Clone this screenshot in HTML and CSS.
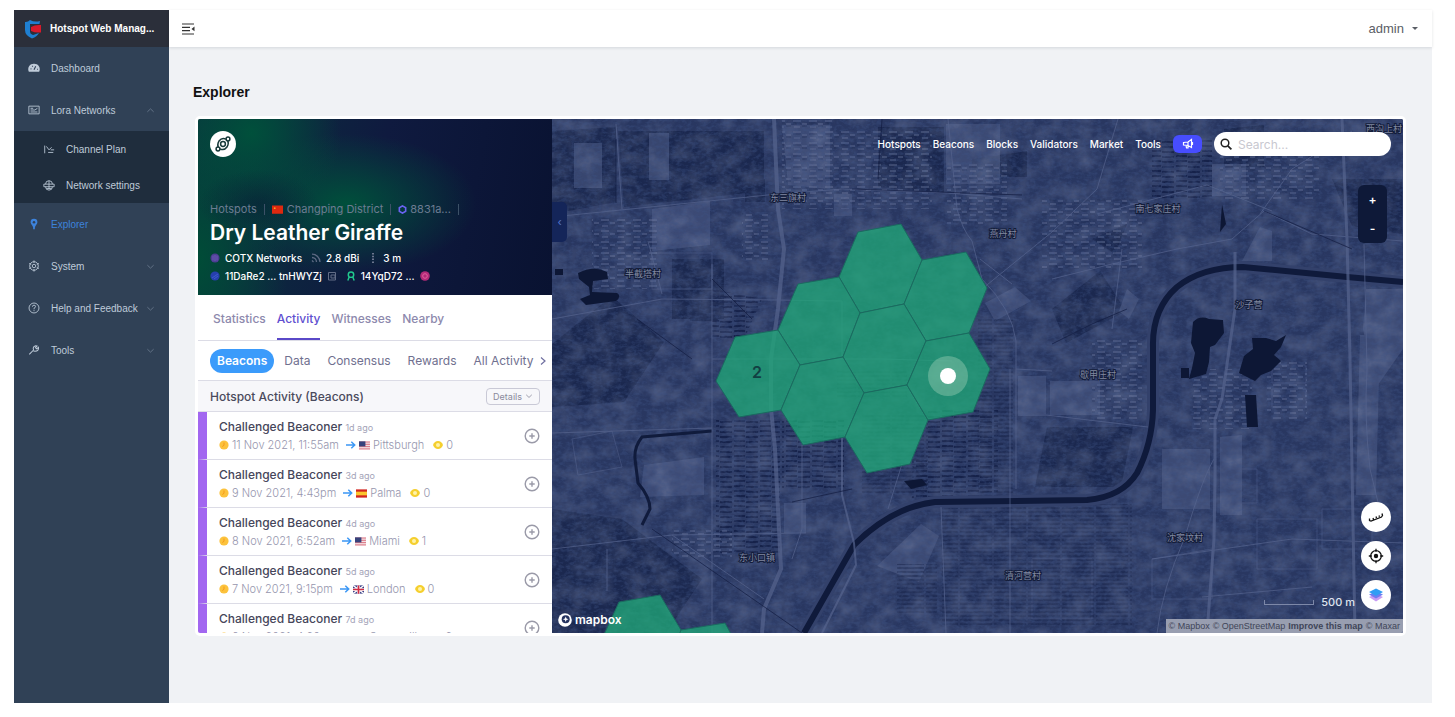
FILE: index.html
```html
<!DOCTYPE html>
<html lang="en">
<head>
  <meta charset="UTF-8">
  <meta name="viewport" content="width=device-width, initial-scale=1">
  <title>Hotspot Web Manager - Explorer</title>
  <link rel="stylesheet" href="styles.css">
</head>
<body>
  <!-- Shared symbols -->
  <svg class="symbols" aria-hidden="true">
    <symbol id="chevron" viewBox="0 0 10 10"><path d="M1.500 3.500 5 6.800l3.500-3.300" fill="none" stroke="currentColor"/></symbol>
    <symbol id="clock" viewBox="0 0 10 10"><circle cx="5" cy="5" r="4.600" fill="#fcc23c"/><path d="M5 2.500V5.300L3.300 6.500" fill="none" stroke="#f59a1b"/></symbol>
    <symbol id="arrow" viewBox="0 0 10 10"><path d="M0 5h8.500M5.300 1.800 8.700 5 5.300 8.200" fill="none" stroke="#3b97f5" stroke-width="1.500"/></symbol>
    <symbol id="eye" viewBox="0 0 10 10"><path d="M0 5Q1.500 1 5 1t5 4q-1.500 4-5 4T0 5z" fill="#f5cf2e"/><circle cx="5" cy="5" r="2" fill="#fff3a8"/></symbol>
    <symbol id="plus" viewBox="0 0 16 16"><circle cx="8" cy="8" r="6.800" fill="none" stroke="currentColor" stroke-width="1.400"/><path d="M8 5.300v5.400M5.300 8h5.400" stroke="currentColor" stroke-width="1.400"/></symbol>
    <symbol id="flag-us" viewBox="0 0 12 9"><path fill="#f3dfe2" d="M0 0h12v9H0z"/><path d="M0 .7h12M0 3.200h12M0 5.700h12M0 8.200h12" stroke="#d9697a"/><path fill="#37437c" d="M0 0h7v5.500H0z"/></symbol>
    <symbol id="flag-es" viewBox="0 0 12 9"><path fill="#d3241e" d="M0 0h12v9H0z"/><path fill="#fbc52d" d="M0 2.500h12v4H0z"/></symbol>
    <symbol id="flag-gb" viewBox="0 0 12 9"><path fill="#3a3f86" d="M0 0h12v9H0z"/><path d="m0 0 12 9M12 0 0 9" stroke="#fff" stroke-width="1.500"/><path d="M6 0v9M0 4.500h12" stroke="#fff" stroke-width="3"/><path d="M6 0v9M0 4.500h12" stroke="#d22d43" stroke-width="1.800"/></symbol>
  </svg>

  <div class="app">
    <aside class="sidebar">
      <a href="#" class="logo">
        <svg viewBox="0 0 18 20"><path fill="#1f7fd0" d="M1 3q3 .3 5-2 4.500 2.500 10 1l-.5 3H6v8q0 2 3 3l6-2q-2 3.500-7 5.500-7-3-7-8.500z"/><path fill="#d71a2b" d="M7 8q4-2.500 10-2v7.500Q11 14 7 12z"/></svg>
        <span>Hotspot Web Manag...</span>
      </a>
      <nav>
        <ul class="menu">
          <li><a href="#">
            <svg class="icon" viewBox="0 0 14 14"><path fill="currentColor" d="M7 2a6.500 6.500 0 0 0-6 9.500h12A6.500 6.500 0 0 0 7 2z"/><path d="m7 9 2-4M3 8h1M10.500 8.500h1M5 4.500l.6.8" stroke="#304156" stroke-width="1.300"/></svg>
            Dashboard</a></li>
          <li>
            <a href="#">
              <svg class="icon" viewBox="0 0 14 14"><path d="M1 2.500h12v9H1zM3 5h3M3 7h5l3-2M3 9.300h8" fill="none" stroke="currentColor"/></svg>
              Lora Networks<svg class="chevron up"><use href="#chevron"/></svg></a>
            <ul class="submenu">
              <li><a href="#"><svg class="icon" viewBox="0 0 14 14"><path d="M2 3v9M4 4l3 4 3-3M6 11h6M9 8h4" fill="none" stroke="currentColor"/></svg>Channel Plan</a></li>
              <li><a href="#"><svg class="icon" viewBox="0 0 14 14"><path d="M3 6a4 4 0 0 1 8 0M1 6h12v3H1zM3 9a4 4 0 0 0 8 0M7 2v10M4 11h6" fill="none" stroke="currentColor"/></svg>Network settings</a></li>
            </ul>
          </li>
          <li><a href="#" class="active">
            <svg class="icon" viewBox="0 0 14 14"><path fill="currentColor" d="M7 1a4 4 0 0 0-4 4c0 2 2.500 4 3 6v2h2v-2c.5-2 3-4 3-6a4 4 0 0 0-4-4z"/><circle cx="7" cy="5" r="1.500" fill="#304156"/></svg>
            Explorer</a></li>
          <li><a href="#">
            <svg class="icon" viewBox="0 0 14 14"><g fill="none" stroke="currentColor"><circle cx="7" cy="7" r="5"/><circle cx="7" cy="7" r="2"/><path d="M7 .5v3M7 10.500v3M1.300 4l2.500 1.300M10.200 8.700l2.500 1.300M1.300 10l2.500-1.300M10.200 5.300 12.700 4"/></g></svg>
            System<svg class="chevron"><use href="#chevron"/></svg></a></li>
          <li><a href="#">
            <svg class="icon" viewBox="0 0 14 14"><g fill="none" stroke="currentColor"><circle cx="7" cy="7" r="5.800"/><path d="M5.200 5.500q0-1.800 1.800-1.800t1.800 1.600Q8.800 6.500 7 7.300v1.200M7 9.500v1.200"/></g></svg>
            Help and Feedback<svg class="chevron"><use href="#chevron"/></svg></a></li>
          <li><a href="#">
            <svg class="icon" viewBox="0 0 14 14"><path d="m1.500 12 5-5M6.500 7Q5 3 9 2l1.500.3-1.800 2 1.500 1.400 2-1.800Q13 8 8 8.500L6 8" fill="none" stroke="currentColor" stroke-width="1.200"/></svg>
            Tools<svg class="chevron"><use href="#chevron"/></svg></a></li>
        </ul>
      </nav>
    </aside>

    <div class="page">
      <header class="topbar">
        <button class="fold" aria-label="Collapse menu">
          <svg viewBox="0 0 13 12"><path d="M0 1h12M0 4.300h8M0 7.600h8M0 11h12" stroke="#333" stroke-width="1.200"/><path d="m12.500 3.500-3 2.400 3 2.400z" fill="#333"/></svg>
        </button>
        <button class="user">admin <span class="caret"></span></button>
      </header>

      <main>
        <h1>Explorer</h1>
        <div class="frame">
          <section class="panel">
            <div class="hero">
              <a href="#" class="helium" aria-label="Helium">
                <svg viewBox="0 0 26 26"><circle cx="13" cy="13" r="13" fill="#fff"/><g fill="none" stroke="#173a3a" stroke-width="1.500"><circle cx="13" cy="13" r="2.400"/><path d="M16 8.200q-4-2.200-7 1.800-2 3.500-.8 6.300M10 17.800q4 2.200 7-1.800 2-3.500.8-6.300"/><circle cx="18" cy="8" r="1.900"/><circle cx="8" cy="18" r="1.900"/></g></svg>
              </a>
              <div class="crumbs">
                <a href="#">Hotspots</a><i></i>
                <a href="#"><svg class="cn" viewBox="0 0 12 9"><path fill="#de2910" d="M0 0h12v9H0z"/><circle cx="3" cy="3" r="1" fill="#f8a020"/></svg>Changping District</a><i></i>
                <a href="#"><svg class="hexa" viewBox="0 0 10 10"><path d="m5 1 3.500 2v4L5 9 1.500 7V3z" fill="none" stroke="#6b63f2" stroke-width="1.800"/></svg>8831a...</a><i></i>
              </div>
              <h2>Dry Leather Giraffe</h2>
              <div class="facts">
                <svg viewBox="0 0 10 10"><circle cx="5" cy="5" r="4.500" fill="#4e3d94"/><path d="M3 2.500v5M5 2v6M7 2.500v5" stroke="#7d6bc8" stroke-width=".7"/></svg>
                <span>COTX Networks</span>
                <svg class="later" viewBox="0 0 10 10"><path d="M1 1.200A8 8 0 0 1 9 9M1 4.500A4.500 4.500 0 0 1 5.500 9M1 7.500 2.500 9" fill="none" stroke="#5d6a83" stroke-width="1.300"/></svg>
                <span>2.8 dBi</span>
                <svg class="later" viewBox="0 0 10 10"><path d="M5 0v10" stroke="#6d778f" stroke-width="2" stroke-dasharray="1.500 1.300"/></svg>
                <span>3 m</span>
              </div>
              <div class="facts">
                <svg viewBox="0 0 10 10"><circle cx="5" cy="5" r="4.600" fill="#263fae"/><path d="M2 7 8 3M4 8l4-3" stroke="#4668d8" stroke-width=".7"/></svg>
                <span>11DaRe2 ... tnHWYZj</span>
                <svg viewBox="0 0 10 10"><path d="M1.500 1.500h7v7.500h-7zM4 4h4v3H4z" fill="none" stroke="#626d86"/></svg>
                <svg class="later" viewBox="0 0 10 11"><circle cx="5" cy="4" r="3" fill="none" stroke="#22c98e" stroke-width="1.600"/><path d="M3 6.500 1.500 10.500M7 6.500l1.500 4" stroke="#22c98e" stroke-width="1.600"/></svg>
                <span>14YqD72 ...</span>
                <svg viewBox="0 0 10 10"><circle cx="5" cy="5" r="4.800" fill="#b32a78"/><circle cx="5" cy="5" r="2.300" fill="none" stroke="#e25f9d"/></svg>
              </div>
            </div>

            <nav class="tabs">
              <a href="#">Statistics</a>
              <a href="#" class="active">Activity</a>
              <a href="#">Witnesses</a>
              <a href="#">Nearby</a>
            </nav>

            <div class="filters">
              <button class="active">Beacons</button>
              <button>Data</button>
              <button>Consensus</button>
              <button>Rewards</button>
              <button>All Activity</button>
              <svg viewBox="0 0 6 10"><path d="m1 1.500 4 3.500-4 3.500" fill="none" stroke="#6f6fa0" stroke-width="1.200"/></svg>
            </div>

            <div class="list-head">
              <h3>Hotspot Activity (Beacons)</h3>
              <button>Details <svg><use href="#chevron"/></svg></button>
            </div>

            <ul class="activity">
              <li>
                <div>
                  <p class="event">Challenged Beaconer <small>1d ago</small></p>
                  <p class="meta"><svg><use href="#clock"/></svg>11 Nov 2021, 11:55am<svg class="to"><use href="#arrow"/></svg><svg class="flag"><use href="#flag-us"/></svg>Pittsburgh<svg class="seen"><use href="#eye"/></svg>0</p>
                </div>
                <button aria-label="Expand"><svg><use href="#plus"/></svg></button>
              </li>
              <li>
                <div>
                  <p class="event">Challenged Beaconer <small>3d ago</small></p>
                  <p class="meta"><svg><use href="#clock"/></svg>9 Nov 2021, 4:43pm<svg class="to"><use href="#arrow"/></svg><svg class="flag"><use href="#flag-es"/></svg>Palma<svg class="seen"><use href="#eye"/></svg>0</p>
                </div>
                <button aria-label="Expand"><svg><use href="#plus"/></svg></button>
              </li>
              <li>
                <div>
                  <p class="event">Challenged Beaconer <small>4d ago</small></p>
                  <p class="meta"><svg><use href="#clock"/></svg>8 Nov 2021, 6:52am<svg class="to"><use href="#arrow"/></svg><svg class="flag"><use href="#flag-us"/></svg>Miami<svg class="seen"><use href="#eye"/></svg>1</p>
                </div>
                <button aria-label="Expand"><svg><use href="#plus"/></svg></button>
              </li>
              <li>
                <div>
                  <p class="event">Challenged Beaconer <small>5d ago</small></p>
                  <p class="meta"><svg><use href="#clock"/></svg>7 Nov 2021, 9:15pm<svg class="to"><use href="#arrow"/></svg><svg class="flag"><use href="#flag-gb"/></svg>London<svg class="seen"><use href="#eye"/></svg>0</p>
                </div>
                <button aria-label="Expand"><svg><use href="#plus"/></svg></button>
              </li>
              <li>
                <div>
                  <p class="event">Challenged Beaconer <small>7d ago</small></p>
                  <p class="meta"><svg><use href="#clock"/></svg>6 Nov 2021, 4:20am<svg class="to"><use href="#arrow"/></svg><svg class="flag"><use href="#flag-us"/></svg>Somerville<svg class="seen"><use href="#eye"/></svg>2</p>
                </div>
                <button aria-label="Expand"><svg><use href="#plus"/></svg></button>
              </li>
            </ul>
          </section>

          <section class="map">
            <svg class="tiles" viewBox="0 0 851 514" preserveAspectRatio="xMidYMid slice">
              <defs>
                <filter id="land" x="0" y="0" width="100%" height="100%">
                  <feTurbulence type="fractalNoise" baseFrequency=".05 .06" numOctaves="4" seed="8"/>
                  <feColorMatrix values="0 0 0 0 .36  0 0 0 0 .42  0 0 0 0 .6  1.600 0 0 0 -.55"/>
                </filter>
                <filter id="grain" x="0" y="0" width="100%" height="100%">
                  <feTurbulence type="fractalNoise" baseFrequency=".2 .3" numOctaves="3" seed="3"/>
                  <feColorMatrix values="0 0 0 0 .05  0 0 0 0 .09  0 0 0 0 .24  0 3 0 0 -1.200"/>
                </filter>
                <pattern id="rows" width="26" height="5" patternUnits="userSpaceOnUse">
                  <path d="M0 2h11M12 3h12" stroke="#16224a" stroke-width="2"/>
                </pattern>
                <pattern id="fine" width="34" height="4" patternUnits="userSpaceOnUse">
                  <path d="M0 1h32" stroke="#17234a"/>
                </pattern>
                <pattern id="blocks" width="16" height="11" patternUnits="userSpaceOnUse">
                  <path d="M1 2h8M10 5h5M2 8h6" stroke="#5a678e" stroke-width="2"/>
                  <path d="M1 4h8M10 7h5" stroke="#16224a"/>
                </pattern>
              </defs>

              <rect width="851" height="514" fill="#293761"/>
              <!-- fields -->
              <g fill="#1b284f">
                <path d="M0 12 64 8v75L0 95zM66 12h146v60L72 88zM326 8h66v66l-66-6zM138 152h28v50h-28zM0 225l60-48 52 46-40 60-72 5zM193 60h20v23h-20zM500 190l48-38 26 40-60 32z"/>
                <path d="M495 308h86l-12 60h-86zM120 140h52v60h-52zM672 10l40-4v42h-40zM540 120l35-15-12 30zM780 60h70v55l-50-8zM0 390l70 10 80 60-36 54H0zM420 40l55-8v26h-55z"/>
              </g>
              <g fill="#45537d" opacity=".7">
                <path d="M97 14h20v47H97zM22 24h28v45H22zM230 6h48v64l-42-4zM394 5h54v60h-54zM282 75h18v22h-18zM100 90l58-8v44l-58 6zM92 346l60-8v38l-64 2zM690 142l18-34 12 4v30zM433 184l30-16 16 14-36 20zM232 384h22v30h-22z"/>
                <path d="M466 257h28v40h-28zM498 262h50v34h-50zM610 330h48v60h-48zM814 170h37v60l-28 40-12-60zM808 216h20l-4 160h-20zM668 318l22-2v80h-22zM575 170l12 10-10 20-10-8zM660 45h34v32h-34zM325 447l44-42 18 12-20 46z"/>
              </g>
              <g fill="none" stroke="#3d4b76" stroke-width="1">
                <path d="M100 134h60v36h-60zM720 246h34v18h-34zM720 270h34v18h-34zM675 350h30v34h-30zM705 400h60v50h-60zM600 440l60-10v50h-60zM480 440h60v60h-60zM770 390h50v40h-50zM20 320l40-8 10 36-44 8z"/>
              </g>
              <path d="M164 300h64v135h-64zM230 300h62v70h-62zM160 170l50 10-18 40h-32zM376 290h70v88h-70zM360 340h30v40h-30zM600 20h60v60h-60z" fill="url(#rows)"/>
              <path d="M426 200h35v230h-35zM390 385h190v122H390zM285 250h70v30h-70zM345 445h40v50h-40zM310 296h66v80h-66z" fill="url(#fine)"/>
              <path d="M230 0h50v90h-50zM395 45h60v60h-60zM490 80h100v70H490zM40 100h66v70H40zM668 20h100v60H668zM540 220h50v80h-50zM640 250h60v60h-60zM715 240h40v60h-40zM120 410h60v30h-60zM190 94h26v50h-26zM280 10h100v80H280z" fill="url(#blocks)" opacity=".5"/>
              <rect width="851" height="514" filter="url(#land)" opacity=".3"/>
              <rect width="851" height="514" filter="url(#grain)" opacity=".36"/>

              <!-- water -->
              <g fill="#0d1735">
                <path d="M641 203q7-7 16-3l14 1 1 13-9 12-5 2-1 15-3 12-17 5 3-11 3-15-4-10zM687 254l5-17 9-7-1-11h14l10 3 10-6-5 12-7 8 7 6-10 10-10 4-6 6zM693 276h11l2 32h-11zM629 249h8v10h-8zM670 85l4 20-6 8z"/>
                <path d="M26 154q16-8 29-1l1 7-15 2-1 11 25 1q5 3-1 8l-30 4-6-6 10-4-1-8-10-8zM3 150h8v6H3zM352 362l18-2 5 6-16 4z"/>
              </g>
              <path d="M160 312 90 318q-8 10-7 22l3 24q12 14 12 26l-8 16" fill="none" stroke="#101b3c" stroke-width="3"/>
              <g fill="none">
                <path d="M252 514 302 426Q340 388 383 383L535 381Q570 378 585 354 600 325 601 291V228Q600 190 625 168 650 148 691 148L795 158 851 163" stroke="#33416b" stroke-width="12"/>
                <path d="M252 514 302 426Q340 388 383 383L535 381Q570 378 585 354 600 325 601 291V228Q600 190 625 168 650 148 691 148L795 158 851 163" stroke="#0f1a3b" stroke-width="6"/>
              </g>

              <!-- roads -->
              <g fill="none" stroke="#56648e" opacity=".7">
                <path d="M222 0 226 90 232 130 226 190 219 240V290L223 330 229 450 212 490 210 514" stroke-width="4"/>
                <path d="M790 0 795 120 798 240 803 514" stroke-width="3"/>
                <path d="M683 133V190L670 280 663 300V361L662 420 655 514" stroke-width="3"/>
                <path d="M290 318V376L302 424 304 446 282 490 270 514" stroke-width="2"/>
                <path d="M389 388 394 514M396 0 405 90Q410 110 420 122L430 160Q460 190 464 222V370M0 98 216 76 290 70 396 74 470 80M0 200 110 180 226 181 290 182M0 314 160 309"/>
                <path d="M0 430 120 416 254 414M120 416 212 480M160 145V514M250 326V410L240 440M290 182V240M430 170 500 113 545 70 566 0M500 160 560 145 625 130 680 120 712 92 760 115 851 122M545 95 655 66 720 92"/>
                <path d="M708 95 740 50 800 12M812 125 815 250Q812 300 818 350L830 400M600 440 740 420 851 424M633 418Q650 360 662 340M633 418Q610 470 605 514M464 250 500 252M494 296 596 308M428 140 460 165M160 240H330L400 242M55 430V472M650 478 760 468"/>
                <path d="M64 5 70 90M96 122 110 175M350 345 336 390M458 250V514M560 210 570 130"/>
              </g>
              <g fill="none" stroke="#121d42" opacity=".7">
                <path d="M300 70 470 76M64 84V20M85 200 140 240M100 410 250 514M712 92 800 130M330 0 326 60M575 190 540 205 500 225M240 383 300 370M160 160 200 200"/>
              </g>

              <!-- hotspot hexes -->
              <g fill="#20a877" fill-opacity=".76" stroke="#1b6a60" stroke-width="1">
                <path d="M306 113 349 105 370 141 352 185 308 194 287 158z"/>
                <path d="M370 141 414 133 435 169 417 214 374 222 352 185z"/>
                <path d="M246 165 287 158 308 194 291 238 248 246 226 211z"/>
                <path d="M308 194 352 185 374 222 355 266 312 274 291 238z"/>
                <path d="M183 218 226 211 248 246 229 291 187 298 164 262z"/>
                <path d="M248 246 291 238 312 274 293 318 251 326 229 291z"/>
                <path d="M312 274 355 266 376 301 358 345 315 354 293 318z"/>
                <path d="M374 222 417 214 438 250 421 293 376 301 355 266z"/>
                <path d="M67 483 108 476 129 511 128 520H50z"/>
                <path d="M129 511 173 504 184 524H124z"/>
              </g>
              <text class="count" x="205" y="259">2</text>
              <circle cx="396" cy="257" r="20" fill="#bfe0c8" fill-opacity=".33"/>
              <circle cx="396" cy="257" r="8" fill="#fff"/>

              <g class="places">
                <text x="236" y="82">东三旗村</text>
                <text x="91" y="158">半截塔村</text>
                <text x="451" y="118">燕丹村</text>
                <text x="606" y="93">南七家庄村</text>
                <text x="832" y="13">西沟上村</text>
                <text x="697" y="189">沙子营</text>
                <text x="546" y="259">歇甲庄村</text>
                <text x="633" y="422">沈家坟村</text>
                <text x="471" y="460">清河营村</text>
                <text x="205" y="442">东小口镇</text>
              </g>
            </svg>

            <button class="collapse" aria-label="Hide panel">‹</button>

            <div class="map-nav">
              <a href="#">Hotspots</a>
              <a href="#">Beacons</a>
              <a href="#">Blocks</a>
              <a href="#">Validators</a>
              <a href="#">Market</a>
              <a href="#">Tools</a>
              <button class="news" aria-label="Announcements">
                <svg viewBox="0 0 12 12"><path d="M1.500 4.500 6 4l3.500-2.500v8L6 7.500l-4.500-.5zM6 4v6H4.500L4 7.200M10.500 4v3" fill="none" stroke="#fff" stroke-width="1.200"/></svg>
              </button>
              <label class="search">
                <svg viewBox="0 0 12 12"><circle cx="5" cy="5" r="3.800" fill="none" stroke="#222" stroke-width="1.500"/><path d="m7.800 7.800 3.600 3.600" stroke="#222" stroke-width="1.700"/></svg>
                <input type="text" placeholder="Search..." aria-label="Search">
              </label>
            </div>

            <div class="zoom">
              <button aria-label="Zoom in">+</button>
              <button aria-label="Zoom out">-</button>
            </div>

            <div class="tools">
              <button aria-label="Measure"><svg viewBox="0 0 16 16"><path d="M1.500 9.500v2l1.500.5L13.500 8l1-1.500-.5-2M5 9l.5 1.500M8 7.500 8.500 9M11 6.500l.5 1.300" fill="none" stroke="#111" stroke-width="1.300"/></svg></button>
              <button aria-label="Locate"><svg viewBox="0 0 16 16"><circle cx="8" cy="8" r="5.300" fill="none" stroke="#111" stroke-width="1.300"/><circle cx="8" cy="8" r="2.200" fill="#111"/><path d="M8 .8v3M8 12.200v3M.8 8h3M12.200 8h3" stroke="#111" stroke-width="1.300"/></svg></button>
              <button aria-label="Layers"><svg viewBox="0 0 16 16"><path fill="#c79bf3" d="m1 10 7-3 7 3-7 4.500z"/><path fill="#6d7cf0" d="m1 7.500 7-3 7 3-7 4z"/><path fill="#2f9df4" d="m1 5 7-3.500L15 5 8 9z"/></svg></button>
            </div>

            <div class="scale"><i></i>500 m</div>

            <a href="#" class="mapbox">
              <svg viewBox="0 0 14 14"><circle cx="7" cy="7" r="6.800" fill="#fff"/><circle cx="7.700" cy="6.300" r="4" fill="#25335f"/><path fill="#fff" d="m7.700 3.500.8 2 2 .8-2 .8-.8 2-.8-2-2-.8 2-.8z"/></svg>
              mapbox
            </a>

            <div class="credit">
              <a href="#">© Mapbox</a>
              <a href="#">© OpenStreetMap</a>
              <a href="#"><b>Improve this map</b></a>
              <a href="#">© Maxar</a>
            </div>
          </section>
        </div>
      </main>
    </div>
  </div>
</body>
</html>
```
FILE: styles.css
```css
/* Reset & base */
* {
  box-sizing: border-box;
  margin: 0;
  padding: 0;
}
body {
  font-family: "Liberation Sans", Arial, sans-serif;
  background: #fff;
  color: #111;
  height: 100vh;
  padding: 10px 23px 14px 14px;
}
a {
  color: inherit;
  text-decoration: none;
}
ul {
  list-style: none;
}
button {
  font: inherit;
  color: inherit;
  background: none;
  border: none;
  cursor: pointer;
}
svg {
  display: block;
  flex: none;
}
.symbols {
  display: none;
}
.app {
  display: flex;
  height: 100%;
}

/* Sidebar */
.sidebar {
  flex: none;
  width: 155px;
  background: #304156;
  color: #bfcbd9;
  font-size: 10px;
}
.logo {
  display: flex;
  align-items: center;
  gap: 8px;
  height: 37px;
  padding: 0 8px 0 10px;
  background: #2b2f3a;
  color: #fff;
  font-weight: bold;
}
.logo svg {
  width: 18px;
  height: 20px;
}
.logo span {
  white-space: nowrap;
}
.menu a {
  display: flex;
  align-items: center;
  height: 42px;
  padding: 0 14px;
  white-space: nowrap;
}
.menu .icon {
  width: 12px;
  height: 12px;
  margin-right: 11px;
}
.menu .active {
  color: #3d83dc;
}
.menu .chevron {
  width: 9px;
  height: 9px;
  margin-left: auto;
  color: #66768a;
}
.menu .up {
  transform: rotate(180deg);
}
.menu .submenu {
  background: #1f2d3d;
}
.submenu a {
  height: 36px;
  padding-left: 29px;
}

/* Top bar */
.page {
  flex: 1;
  min-width: 0;
  display: flex;
  flex-direction: column;
  background: #f0f2f5;
}
.topbar {
  display: flex;
  align-items: center;
  justify-content: space-between;
  height: 37px;
  padding: 0 14px 0 13px;
  background: #fff;
  box-shadow: 0 1px 3px rgba(0,21,41,0.12);
}
.fold svg {
  width: 13px;
  height: 12px;
}
.user {
  display: flex;
  align-items: center;
  gap: 8px;
  font-size: 13px;
  color: #5a5e66;
}
.caret {
  border: 3px solid transparent;
  border-top-color: #5a5e66;
  border-bottom: 0;
}

/* Content */
main {
  flex: 1;
  min-height: 0;
  display: flex;
  flex-direction: column;
  padding: 35px 24px 67px;
}
h1 {
  margin-bottom: 14px;
  font-size: 14px;
  line-height: 20px;
}
.frame {
  flex: 1;
  min-height: 0;
  display: flex;
  margin: 0 2px;
  border: 3px solid #fff;
  border-radius: 5px;
  background: #fff;
  font-family: Inter, sans-serif;
  overflow: hidden;
}

/* Hotspot panel */
.panel {
  flex: none;
  width: 354px;
  display: flex;
  flex-direction: column;
  overflow: hidden;
}
.hero {
  flex: none;
  height: 176px;
  padding: 12px;
  color: #fff;
  background:
    radial-gradient(ellipse 60px 34px at 17% 48%, rgba(10,26,54,0.55), transparent),
    radial-gradient(ellipse 90px 90px at 15% 8%, #00503b, transparent),
    radial-gradient(ellipse 130px 70px at 42% 48%, #004f3b, transparent),
    radial-gradient(ellipse 90px 150px at 0 80%, #004c37, transparent),
    linear-gradient(100deg, #0a3440, #0f1a3f 50%, #091231);
}
.helium svg {
  width: 26px;
  height: 26px;
}
.crumbs {
  display: flex;
  align-items: center;
  height: 16px;
  margin-top: 44px;
  font-size: 11px;
  color: #6c7c92;
}
.crumbs a {
  display: flex;
  align-items: center;
}
.crumbs i {
  width: 1px;
  height: 11px;
  margin: 0 7px;
  background: #3c5167;
}
.crumbs svg {
  width: 11px;
  height: 9px;
  margin-right: 4px;
}
.crumbs .hexa {
  width: 9px;
  margin-right: 3px;
}
.hero h2 {
  height: 32px;
  font-size: 21px;
  line-height: 32px;
  font-weight: 600;
}
.facts {
  display: flex;
  align-items: center;
  gap: 5px;
  height: 18px;
  font-size: 10px;
  font-weight: 500;
}
.facts svg {
  width: 10px;
  height: 10px;
}
.facts .later {
  margin-left: 4px;
}
.tabs {
  flex: none;
  display: flex;
  gap: 11px;
  height: 46px;
  padding: 0 15px;
  border-bottom: 1px solid #dcdce6;
  font-size: 12px;
  line-height: 48px;
  font-weight: 500;
  color: #8d89ad;
}
.tabs .active {
  color: #5f4fd0;
  border-bottom: 2px solid #5a48c8;
}
.filters {
  flex: none;
  display: flex;
  align-items: center;
  gap: 3px;
  height: 40px;
  padding: 0 7px 0 12px;
  border-bottom: 1px solid #dcdce6;
  font-size: 12px;
  color: #70708f;
}
.filters button {
  height: 24px;
  padding: 0 7px;
  border-radius: 12px;
  white-space: nowrap;
}
.filters .active {
  background: #3b9bfb;
  color: #fff;
  font-weight: 600;
}
.filters svg {
  width: 6px;
  height: 10px;
  margin-left: -4px;
}
.list-head {
  flex: none;
  display: flex;
  align-items: center;
  justify-content: space-between;
  height: 31px;
  padding: 0 12px;
  background: #f7f7fa;
  border-bottom: 1px solid #dcdce6;
}
.list-head h3 {
  font-size: 12px;
  font-weight: 500;
  color: #4a4a5c;
}
.list-head button {
  display: flex;
  align-items: center;
  gap: 3px;
  height: 17px;
  padding: 0 6px;
  border: 1px solid #c9c9d6;
  border-radius: 4px;
  font-size: 9px;
  color: #8a8a9c;
}
.list-head svg {
  width: 8px;
  height: 8px;
}
.activity li {
  display: flex;
  align-items: center;
  justify-content: space-between;
  height: 48px;
  padding: 0 12px;
  border-left: 9px solid #a267f0;
  border-bottom: 1px solid #dcdce6;
}
.event {
  font-size: 12px;
  line-height: 18px;
  font-weight: 500;
  color: #46465a;
}
.event small {
  font-size: 9px;
  font-weight: 400;
  color: #a3a3b8;
}
.meta {
  display: flex;
  align-items: center;
  font-size: 11px;
  line-height: 17px;
  font-weight: 300;
  color: #9696ae;
}
.meta svg {
  width: 10px;
  height: 10px;
  margin-right: 3px;
}
.meta .to {
  margin: 0 3px 0 7px;
}
.meta .flag {
  width: 11px;
  height: 9px;
}
.meta .seen {
  margin-left: 9px;
}
.activity button {
  color: #9a9aa8;
}
.activity button svg {
  width: 16px;
  height: 16px;
}

/* Map */
.map {
  position: relative;
  flex: 1;
  min-width: 0;
  background: #25335f;
  color: #fff;
  overflow: hidden;
}
.tiles {
  position: absolute;
  inset: 0;
  width: 100%;
  height: 100%;
}
.count {
  font-size: 16px;
  font-weight: 600;
  text-anchor: middle;
  fill: #123f43;
}
.places {
  font-family: "Liberation Sans", "Noto Sans CJK SC", sans-serif;
  font-size: 9px;
  text-anchor: middle;
  fill: #8088a0;
  stroke: #141d3a;
  stroke-width: 2px;
  paint-order: stroke;
}
.collapse {
  position: absolute;
  left: 0;
  top: 83px;
  width: 15px;
  height: 40px;
  border-radius: 0 5px 5px 0;
  background: #142559;
  color: #5676c8;
  font-size: 11px;
}
.map-nav {
  position: absolute;
  top: 13px;
  right: 12px;
  display: flex;
  align-items: center;
  gap: 12px;
  font-size: 10px;
  font-weight: 500;
}
.news {
  display: flex;
  align-items: center;
  justify-content: center;
  width: 29px;
  height: 18px;
  border-radius: 6px;
  background: #474dff;
}
.news svg {
  width: 12px;
  height: 12px;
}
.search {
  display: flex;
  align-items: center;
  gap: 6px;
  width: 177px;
  height: 24px;
  padding: 0 6px;
  border-radius: 12px;
  background: #fff;
}
.search svg {
  width: 12px;
  height: 12px;
}
.search input {
  flex: 1;
  min-width: 0;
  border: none;
  outline: none;
  background: none;
  font: 400 12px Inter, sans-serif;
}
.search input::placeholder {
  color: #c8c8d0;
}
.zoom {
  position: absolute;
  top: 66px;
  right: 16px;
  display: flex;
  flex-direction: column;
  width: 29px;
  border-radius: 6px;
  background: #0e1938;
}
.zoom button {
  height: 29px;
  font-size: 12px;
  font-weight: 600;
}
.tools {
  position: absolute;
  right: 12px;
  bottom: 23px;
  display: flex;
  flex-direction: column;
  gap: 9px;
}
.tools button {
  display: flex;
  align-items: center;
  justify-content: center;
  width: 30px;
  height: 30px;
  border-radius: 50%;
  background: #fff;
}
.tools svg {
  width: 16px;
  height: 16px;
}
.scale {
  position: absolute;
  right: 48px;
  bottom: 23px;
  display: flex;
  align-items: center;
  gap: 7px;
  font-size: 11px;
  line-height: 16px;
  font-weight: 500;
  color: #dfe3ee;
}
.scale i {
  width: 50px;
  height: 5px;
  border: 1px solid #7d88a8;
  border-top: none;
}
.mapbox {
  position: absolute;
  left: 6px;
  bottom: 5px;
  display: flex;
  align-items: center;
  gap: 3px;
  font-size: 12px;
  line-height: 16px;
  font-weight: 600;
}
.mapbox svg {
  width: 14px;
  height: 14px;
}
.credit {
  position: absolute;
  right: 0;
  bottom: 0;
  display: flex;
  gap: 3px;
  padding: 0 3px;
  background: #989eb0;
  color: #3f4558;
  font: 9px/14px "Liberation Sans", Arial, sans-serif;
}
```
